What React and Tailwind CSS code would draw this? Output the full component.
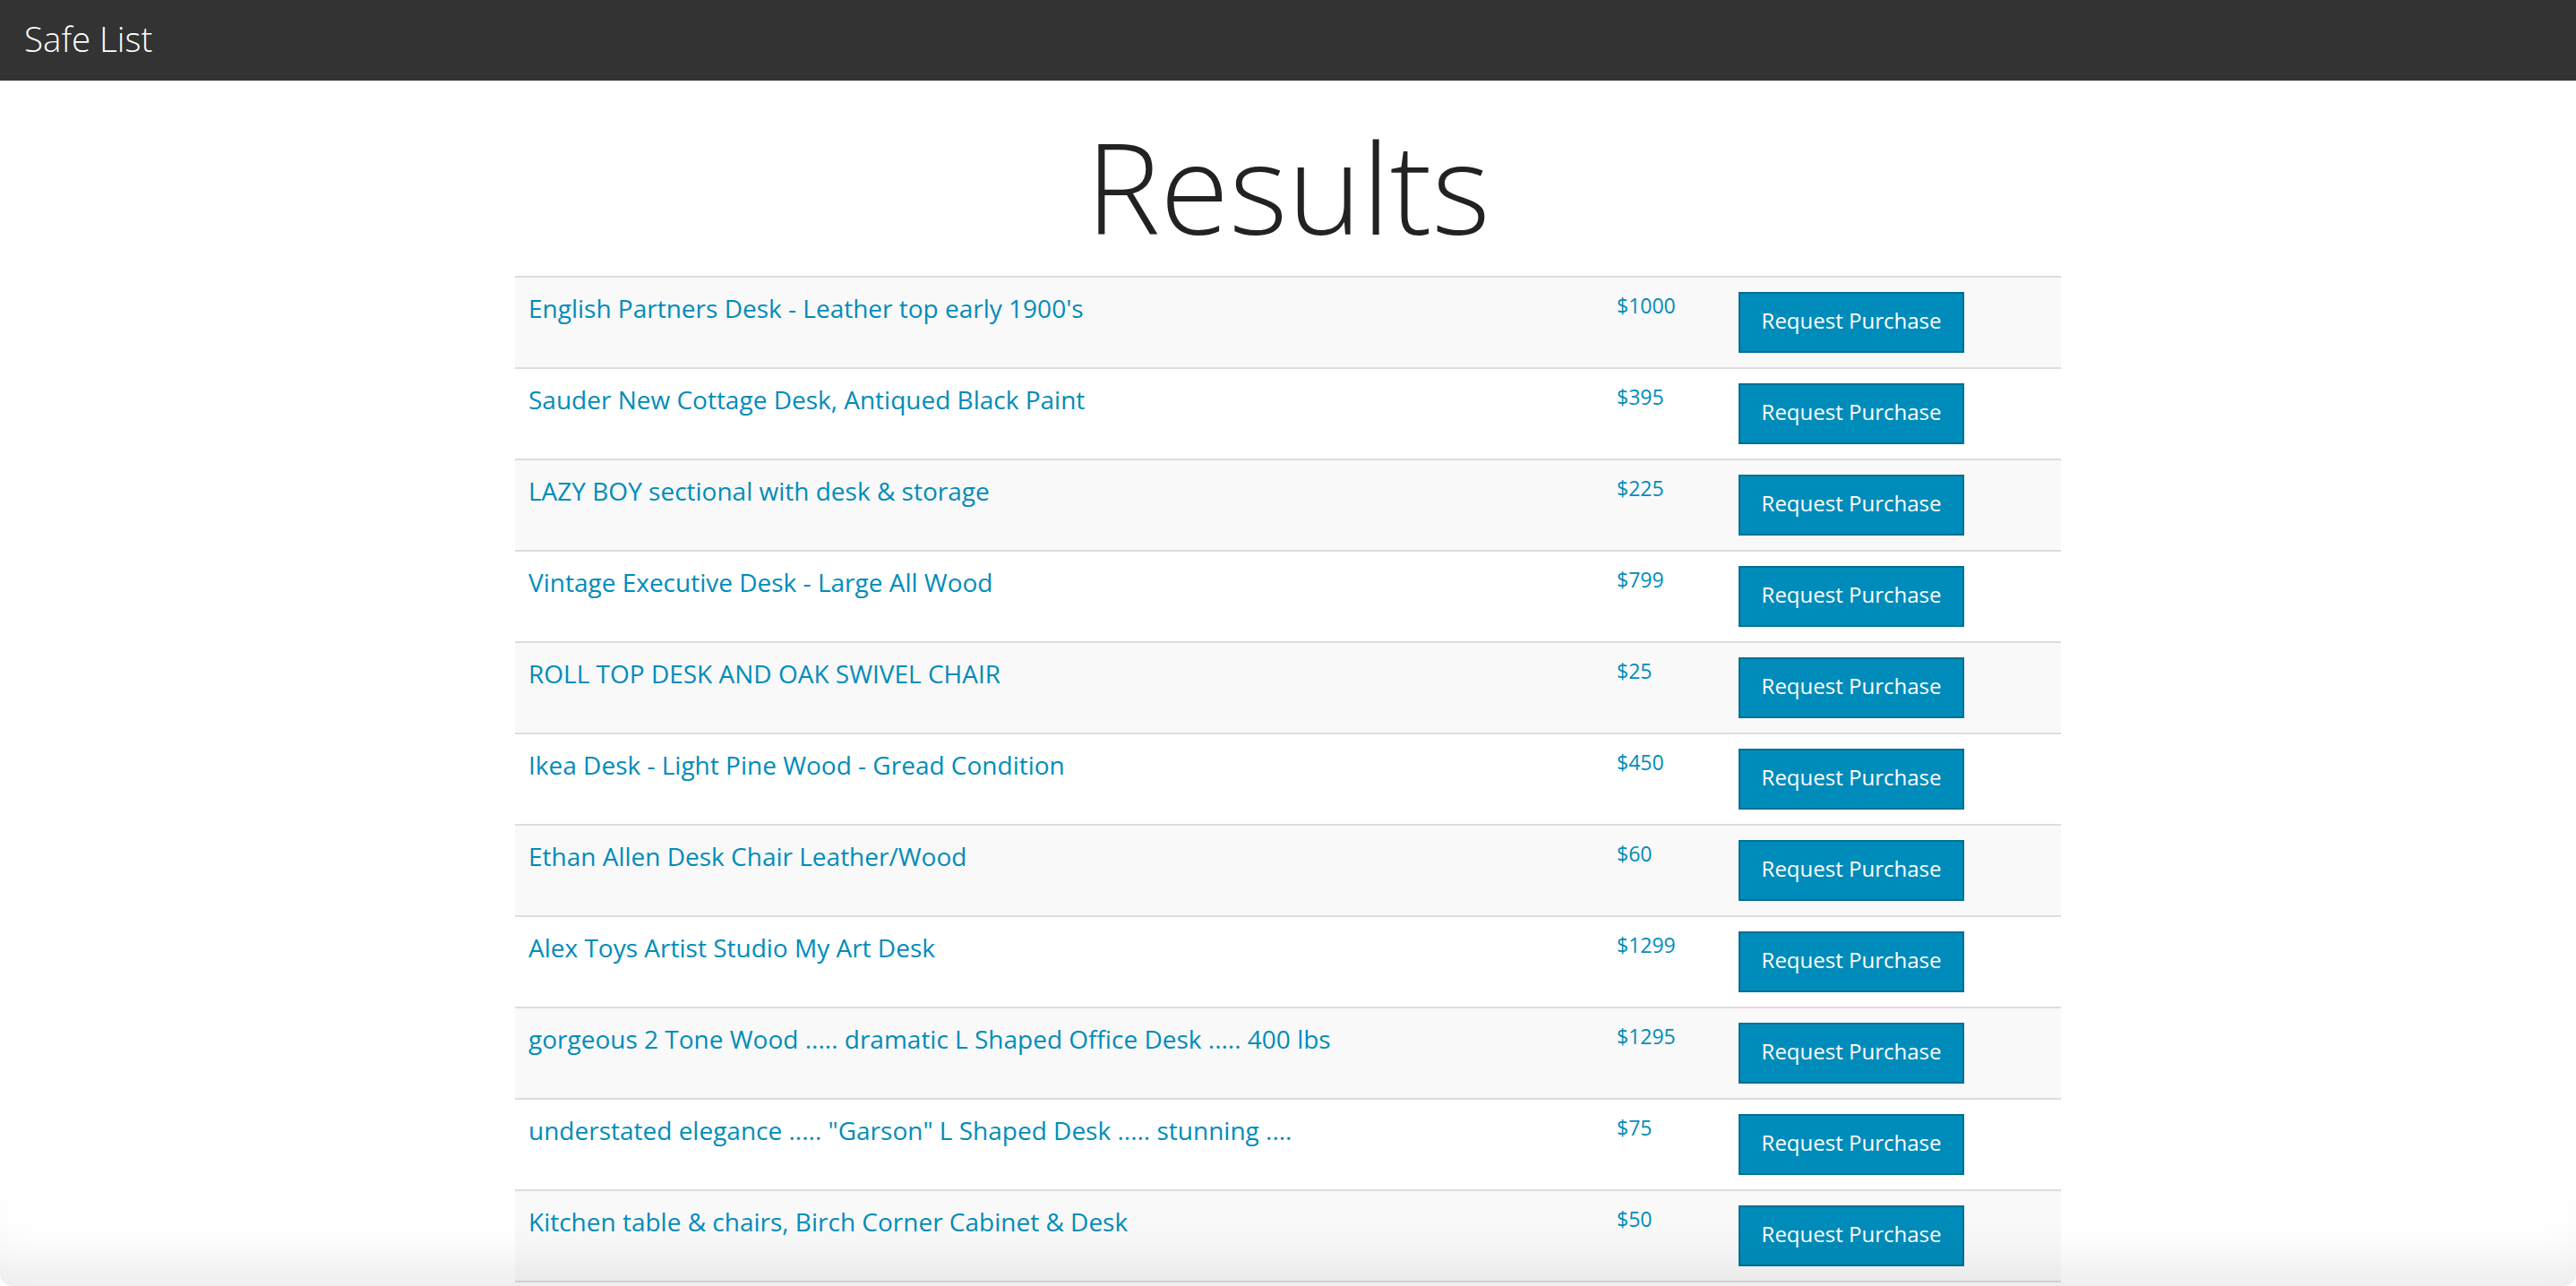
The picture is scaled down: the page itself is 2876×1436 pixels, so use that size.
import React from "react";

const listings = [
  { title: "English Partners Desk - Leather top early 1900's", price: "$1000" },
  { title: "Sauder New Cottage Desk, Antiqued Black Paint", price: "$395" },
  { title: "LAZY BOY sectional with desk & storage", price: "$225" },
  { title: "Vintage Executive Desk - Large All Wood", price: "$799" },
  { title: "ROLL TOP DESK AND OAK SWIVEL CHAIR", price: "$25" },
  { title: "Ikea Desk - Light Pine Wood - Gread Condition", price: "$450" },
  { title: "Ethan Allen Desk Chair Leather/Wood", price: "$60" },
  { title: "Alex Toys Artist Studio My Art Desk", price: "$1299" },
  { title: "gorgeous 2 Tone Wood ..... dramatic L Shaped Office Desk ..... 400 lbs", price: "$1295" },
  { title: 'understated elegance ..... "Garson" L Shaped Desk ..... stunning ....', price: "$75" },
  { title: "Kitchen table & chairs, Birch Corner Cabinet & Desk", price: "$50" },
];

export default function App() {
  return (
    <div className="h-screen overflow-hidden bg-white font-['Open_Sans',sans-serif]">
      {/* Top bar */}
      <nav className="h-[90px] bg-[#333333] pl-[27px]">
        <span className="text-[38.5px] leading-[86px] font-light text-white">Safe List</span>
      </nav>

      <h1 className="mt-[48px] text-center text-[140px] leading-none font-light text-[#222222]">Results</h1>

      {/* Results table */}
      <div className="mx-auto mt-[30px] w-[1726px] border-t-2 border-[#dddddd]">
        {listings.map((item, i) => (
          <div
            key={i}
            className={`flex h-[102px] border-b-2 border-[#dddddd] ${i % 2 === 0 ? "bg-[#f9f9f9]" : "bg-white"}`}
          >
            <a href="#" className="flex-1 pl-[15px] pt-4 text-[28px] leading-[36px] text-[#008cba]">
              {item.title}
            </a>
            <div className="w-[136px] pt-4 text-[23px] leading-[30px] text-[#008cba]">{item.price}</div>
            <div className="w-[360px] pt-4">
              <button className="flex h-[68px] w-[252px] items-center justify-center border-2 border-[#007095] bg-[#008cba] pb-1 text-[24px] text-white">
                Request Purchase
              </button>
            </div>
          </div>
        ))}
      </div>

      {/* window shadow at the bottom edge */}
      <div className="pointer-events-none fixed inset-x-0 bottom-0 h-[120px] rounded-b-[14px] shadow-[inset_0_-60px_60px_-40px_rgba(0,0,0,0.09)]" />
    </div>
  );
}
